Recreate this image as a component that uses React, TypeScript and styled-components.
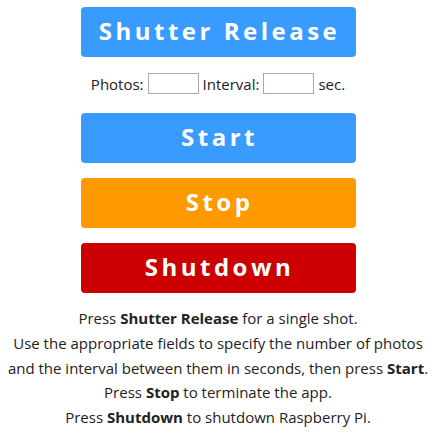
import React from "react";
import styled, { createGlobalStyle } from "styled-components";

const Global = createGlobalStyle`
  html, body { margin: 0; padding: 0; background: #fff; }
  body { font-family: "Open Sans", "DejaVu Sans", sans-serif; color: #222; }
`;

const Page = styled.div`
  display: flex;
  flex-direction: column;
  align-items: center;
  padding-top: 7px;
  padding-left: 1px;
`;

const Btn = styled.button<{ $bg: string }>`
  width: 275px;
  height: 50px;
  border: none;
  border-radius: 4px;
  background: ${(p) => p.$bg};
  color: #fff;
  font-family: "Open Sans", sans-serif;
  font-weight: 700;
  font-size: 24px;
  letter-spacing: 3.5px;
  padding: 0 0 3px 3px;
  margin: 0 0 15px 0;
  display: flex;
  align-items: center;
  justify-content: center;
`;

const Row = styled.div`
  display: flex;
  align-items: center;
  gap: 4px;
  height: 56px;
  padding-bottom: 3px;
  box-sizing: border-box;
  margin-top: -15px;
  font-size: 15px;
  color: #222;
`;

const Field = styled.input`
  width: 51px;
  height: 21px;
  box-sizing: border-box;
  border: 1px solid #a9a9a9;
  margin: 0;
  padding: 0;
`;

const Help = styled.div`
  margin-top: -2px;
  text-align: center;
  font-size: 15px;
  line-height: 24.8px;
  color: #222;
  white-space: nowrap;
`;

export default function App() {
  return (
    <>
      <Global />
      <Page>
        <Btn $bg="#3a9bff">Shutter Release</Btn>
        <Row>
          <span>Photos:</span>
          <Field />
          <span>Interval:</span>
          <Field />
          <span>sec.</span>
        </Row>
        <Btn $bg="#3a9bff">Start</Btn>
        <Btn $bg="#ff9900">Stop</Btn>
        <Btn $bg="#cc0000">Shutdown</Btn>
        <Help>
          Press <b>Shutter Release</b> for a single shot.
          <br />
          Use the appropriate fields to specify the number of photos
          <br />
          and the interval between them in seconds, then press <b>Start</b>.
          <br />
          Press <b>Stop</b> to terminate the app.
          <br />
          Press <b>Shutdown</b> to shutdown Raspberry Pi.
        </Help>
      </Page>
    </>
  );
}
